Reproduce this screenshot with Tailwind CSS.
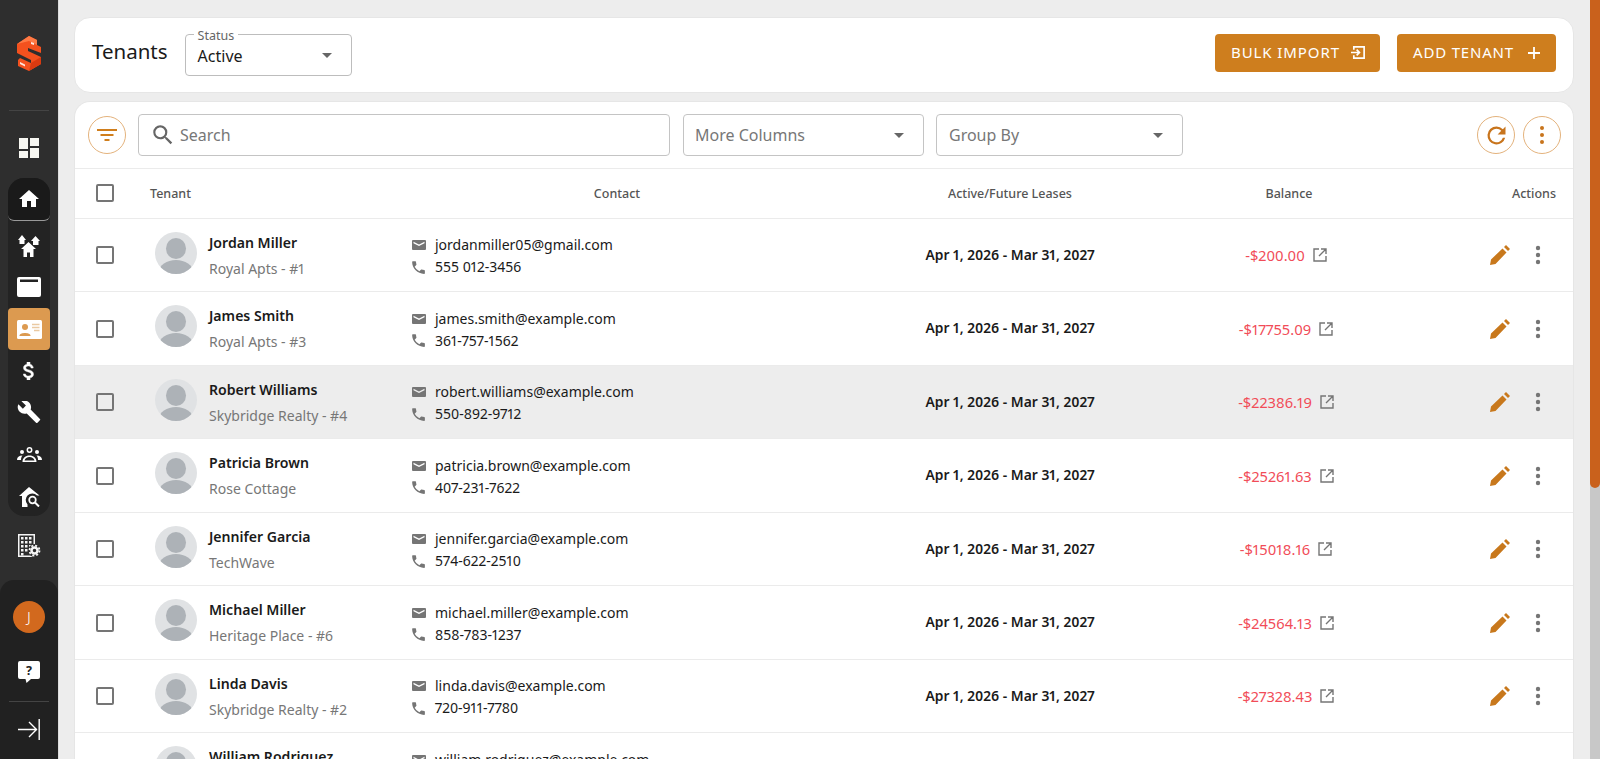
<!DOCTYPE html>
<html lang="en">

<head>
    <meta charset="UTF-8" />
    <title>Tenants</title>
    <script src="https://cdn.jsdelivr.net/npm/@tailwindcss/browser@4"></script>
</head>

<body class="bg-[#ededed] font-['Noto_Sans',sans-serif] proportional-nums text-[#1a1a1a] h-[759px] overflow-hidden">
    <div class="flex h-[759px]">

        <!-- sidebar -->
        <aside class="w-[59px] shrink-0 h-full bg-[#2e2e2e] border-r border-[#dcdcdc] flex flex-col items-center relative">
            <div class="h-[111px] w-[40px] border-b border-[#444] flex justify-center shrink-0 pt-[36px]">
                <svg width="24" height="35" viewBox="0 0 24 35"><path fill="#f4511e" d="M12 0 20 4V9L24 11V17L11 12V15L24 21V28L12 35 1 30V24L3 22 14 27V24L0 17V8Z"/><path fill="#ff7a45" d="M12 0 20 4V9L12 5 0 8Z"/><path fill="#d93a10" d="M14 27 24 21V28L12 35Z"/><path fill="#fff" opacity=".85" d="M3 26l5 2.500v2L3 28zM14 6l3 1v2l-3-1z"/></svg>
            </div>
            <svg class="mt-[27px] mb-[20px] shrink-0" width="20" height="20" viewBox="0 0 20 20" fill="#f7f7f2"><path d="M0 0h9v11H0zM11 0h9v8h-9zM0 13h9v7H0zM11 10h9v10h-9z"/></svg>

            <div class="w-[42px] h-[338px] bg-[#232323] rounded-[16px] flex flex-col items-center shrink-0">
                <div class="w-[42px] h-[43px] shrink-0 bg-[#1a1a1a] rounded-t-[16px] rounded-b-[6px] border-b border-[#999] flex items-center justify-center">
                    <svg width="24" height="24" viewBox="0 0 24 24" fill="#fff"><path d="M10 20v-6h4v6h5v-8h3L12 3 2 12h3v8z"/></svg>
                </div>
                <svg class="mt-[14px] shrink-0" width="22" height="22" viewBox="0 0 22 22" fill="#fff"><path d="M4 0 8 5H6.500V9H1.500V5H0zM17.500 1 22 6H20.500V10H15V6H13zM10.500 7 18 14H15.500V22H12V17.500H9V22H5.500V14H3z"/></svg>
                <svg class="mt-[20px] shrink-0" width="24" height="20" viewBox="0 0 24 20"><path fill="#fff" fill-rule="evenodd" d="M2 0h20a2 2 0 0 1 2 2v16a2 2 0 0 1-2 2H2a2 2 0 0 1-2-2V2a2 2 0 0 1 2-2zM3 2.500V5h18V2.500z"/></svg>
                <div class="mt-[11px] w-[42px] h-[42px] shrink-0 bg-[#dc9a50] rounded-[4px] flex items-center justify-center">
                    <svg width="25" height="19" viewBox="0 0 25 19"><rect width="25" height="19" rx="1.500" fill="#fff"/><circle cx="8" cy="7" r="3" fill="#dc9a50"/><path d="M2.500 15.500c0-3.500 11-3.500 11 0V16h-11z" fill="#dc9a50"/><path d="M15 4.500h7.500M15 7.500h7.500M17 10.500h5.500" stroke="#eac9a2" stroke-width="1.300"/></svg>
                </div>
                <svg class="mt-[12px] shrink-0" width="12" height="18" viewBox="6.500 3 11 18" fill="#fff"><path d="M11.800 10.900c-2.270-.59-3-1.200-3-2.150 0-1.090 1.010-1.850 2.700-1.850 1.780 0 2.440.85 2.500 2.100h2.210c-.07-1.720-1.120-3.300-3.210-3.810V3h-3v2.160c-1.940.42-3.500 1.680-3.500 3.610 0 2.310 1.910 3.460 4.700 4.130 2.500.6 3 1.480 3 2.410 0 .69-.49 1.790-2.700 1.790-2.060 0-2.870-.92-2.980-2.100h-2.200c.12 2.190 1.760 3.420 3.680 3.830V21h3v-2.150c1.950-.37 3.500-1.500 3.500-3.550 0-2.840-2.430-3.810-4.700-4.400z" stroke="#fff" stroke-width=".5"/></svg>
                <svg class="mt-[21px] shrink-0" width="24" height="22" viewBox="1 1.500 22 21.500" fill="#fff"><path d="M22.700 19l-9.100-9.100c.9-2.300.4-5-1.500-6.900-2-2-5-2.400-7.400-1.300L9 6 6 9 1.600 4.700C.4 7.100.9 10.100 2.900 12.100c1.900 1.900 4.600 2.400 6.900 1.500l9.100 9.100c.4.400 1 .4 1.400 0l2.300-2.300c.5-.4.5-1.100.1-1.400z"/></svg>
                <svg class="mt-[24px] shrink-0" width="25" height="15" viewBox="0 0 25 15" fill="#fff"><circle cx="12.500" cy="3" r="2.200" fill="none" stroke="#fff" stroke-width="1.500"/><circle cx="5" cy="5" r="2"/><circle cx="20" cy="5" r="2"/><path d="M0 13c0-3 2-4.500 5.500-4.500-1 1-1.500 2.500-1.500 4.500zM25 13c0-3-2-4.500-5.500-4.500 1 1 1.500 2.500 1.500 4.500zM5.500 15c0-4 3-6.500 7-6.500s7 2.500 7 6.500zM7.500 13.500h10c-.5-2-2.500-3.500-5-3.500s-4.500 1.500-5 3.500z" fill-rule="evenodd"/></svg>
                <svg class="mt-[25px] shrink-0" width="21" height="20" viewBox="0 0 21 20" fill="#fff"><path d="M10 0 20.500 8.500H18A6.500 6.500 0 0 0 8.500 17.500V20H3V9H0z"/><circle cx="13.500" cy="13" r="3.300" fill="none" stroke="#fff" stroke-width="1.700"/><path d="m16 15.500 4 4" stroke="#fff" stroke-width="2"/></svg>
            </div>

            <svg class="mt-[18px] shrink-0" width="23" height="23" viewBox="0 0 23 23" fill="#f5f5f5"><path fill-rule="evenodd" d="M0 0h17v23H0zM1.500 1.500v20h14v-20z"/><path d="M3 3h2.500v2.500H3zM7 3h2.500v2.500H7zM11 3h2.500v2.500H11zM3 7h2.500v2.500H3zM7 7h2.500v2.500H7zM11 7h2.500v2.500H11zM3 11h2.500v2.500H3zM7 11h2.500v2.500H7zM11 11h2.500v2.500H11zM3 15h2.500v2.500H3zM7 15h2.500v2.500H7zM3 19h2.500v2.500H3z"/><circle cx="16.500" cy="16.500" r="6.500" fill="#2e2e2e"/><circle cx="16.500" cy="16.500" r="3" fill="none" stroke="#f5f5f5" stroke-width="2.500"/><circle cx="16.500" cy="16.500" r="5" fill="none" stroke="#f5f5f5" stroke-width="1.800" stroke-dasharray="2 1.930"/></svg>

            <div class="absolute bottom-0 left-0 w-[58px] h-[179px] bg-[#212121] rounded-t-[14px] flex flex-col items-center">
                <div class="mt-[21px] w-[32px] h-[32px] shrink-0 rounded-full bg-[#d2691e] text-white text-[15px] font-light flex items-center justify-center">J</div>
                <svg class="mt-[28px] shrink-0" width="22" height="22" viewBox="0 0 22 22"><path fill="#fff" d="M2 0h18a2 2 0 0 1 2 2v14a2 2 0 0 1-2 2h-7l-4.500 4-1-4H2a2 2 0 0 1-2-2V2a2 2 0 0 1 2-2z"/><text x="11" y="13.500" text-anchor="middle" font-size="12.500" font-weight="700" fill="#222" font-family="Noto Sans">?</text></svg>
                <div class="w-[40px] border-t border-[#444] mt-[18px]"></div>
                <svg class="mt-[17px] shrink-0" width="22" height="21" viewBox="0 0 22 21" fill="none" stroke="#fff" stroke-width="1.400"><path d="M0 10.500h19M11 3l7.500 7.500L11 18M21.200 0v21"/></svg>
            </div>
        </aside>

        <!-- main -->
        <main class="flex-1 min-w-0 flex flex-col pl-[15px] pr-[16px] pt-[17px]">
            <div class="h-[76px] shrink-0 bg-white rounded-[16px] border border-[#e6e6e6] flex items-center pl-[17px] pr-[17px]">
                <h1 class="text-[20.500px] leading-none text-[#1a1a1a] mb-[8px]">Tenants</h1>
                <div class="relative ml-[17px] w-[167px] h-[42px] border border-[#bdbdbd] rounded-[4px] pl-3 pr-[19px] flex items-center justify-between">
                    <span class="absolute -top-[6px] left-[8px] bg-white px-[4px] text-[12.500px] leading-[14px] text-[#666]">Status</span>
                    <span class="text-[16px] mt-[2px]">Active</span>
                    <span class="w-0 h-0 border-x-[5px] border-x-transparent border-t-[5px] border-t-[#666]"></span>
                </div>
                <div class="ml-auto flex gap-[17px] -mt-[5px]">
                    <button class="w-[165px] h-[38px] bg-[#ce7e1e] rounded-[4px] text-white text-[15px] tracking-[0.9px] flex items-center justify-center gap-[11px] pl-[2px]">
                        BULK IMPORT
                        <svg width="15" height="15" viewBox="0 0 16 16" fill="none" stroke="#fff" stroke-width="1.800"><path d="M3 5V2h11v12H3v-3M0 8h9M6 5l3 3-3 3"/></svg>
                    </button>
                    <button class="w-[159px] h-[38px] bg-[#ce7e1e] rounded-[4px] text-white text-[15px] tracking-[0.8px] flex items-center justify-center gap-[14px]">
                        ADD TENANT
                        <svg width="12" height="12" viewBox="0 0 12 12" stroke="#fff" stroke-width="1.800"><path d="M6 0v12M0 6h12"/></svg>
                    </button>
                </div>
            </div>

            <div class="mt-[8px] flex-1 min-h-0 overflow-hidden bg-white rounded-t-[16px] border-x border-t border-[#e6e6e6]">
                <!-- toolbar -->
                <div class="h-[67px] flex items-center pl-[13px] pr-[12px] border-b border-[#ebebeb]">
                    <button class="w-[38px] h-[38px] rounded-full border border-[#e3b27c] flex items-center justify-center">
                        <svg width="20" height="13" viewBox="0 0 20 13" fill="#d07e1c"><path d="M0 0h20v2H0zM3.500 5h13v2h-13zM7.500 10h5v2h-5z"/></svg>
                    </button>
                    <div class="ml-[12px] w-[532px] h-[42px] border border-[#c4c4c4] rounded-[4px] flex items-center pl-[11px] gap-[4px] text-[16px] text-[#777]">
                        <svg width="26" height="26" viewBox="0 0 24 24" fill="#666"><path d="M15.500 14h-.79l-.28-.27A6.470 6.470 0 0 0 16 9.500 6.500 6.500 0 1 0 9.500 16c1.610 0 3.090-.59 4.230-1.570l.27.28v.79l5 4.990L20.490 19l-4.990-5zm-6 0C7.010 14 5 11.990 5 9.500S7.010 5 9.500 5 14 7.010 14 9.500 11.990 14 9.500 14z"/></svg>
                        Search
                    </div>
                    <div class="ml-[13px] w-[241px] h-[42px] border border-[#c4c4c4] rounded-[4px] flex items-center justify-between pl-[11px] pr-[19px] text-[16px] text-[#777]">
                        More Columns
                        <span class="w-0 h-0 border-x-[5px] border-x-transparent border-t-[5px] border-t-[#666]"></span>
                    </div>
                    <div class="ml-[12px] w-[247px] h-[42px] border border-[#c4c4c4] rounded-[4px] flex items-center justify-between pl-3 pr-[19px] text-[16px] text-[#777]">
                        Group By
                        <span class="w-0 h-0 border-x-[5px] border-x-transparent border-t-[5px] border-t-[#666]"></span>
                    </div>
                    <button class="ml-auto w-[38px] h-[38px] rounded-full border border-[#e3b27c] flex items-center justify-center">
                        <svg width="27" height="27" viewBox="0 0 24 24" fill="#c8741c"><path d="M17.650 6.350A7.960 7.960 0 0 0 12 4a8 8 0 1 0 7.730 10h-2.080A6 6 0 1 1 12 6c1.660 0 3.140.69 4.220 1.780L13 11h7V4l-2.350 2.350z"/></svg>
                    </button>
                    <button class="ml-[8px] w-[38px] h-[38px] rounded-full border border-[#e3b27c] flex items-center justify-center">
                        <svg width="24" height="24" viewBox="0 0 24 24" fill="#c8741c"><circle cx="12" cy="5" r="2"/><circle cx="12" cy="12" r="2"/><circle cx="12" cy="19" r="2"/></svg>
                    </button>
                </div>

                <!-- head row -->
                <div class="h-[50px] flex items-center border-b border-[#ebebeb] text-[12.500px] font-medium text-[#555]">
                    <div class="w-[58px] flex justify-center pl-[2px] -mt-[1px]">
                        <span class="w-[18px] h-[18px] border-2 border-[#757575] rounded-[2px]"></span>
                    </div>
                    <div class="w-[279px] pl-[17px] pt-[2px]">Tenant</div>
                    <div class="w-[410px] text-center pt-[2px]">Contact</div>
                    <div class="w-[376px] text-center pt-[2px]">Active/Future Leases</div>
                    <div class="w-[180px] text-center pl-[2px] pt-[2px]">Balance</div>
                    <div class="flex-1 text-right pr-[17px] pt-[2px]">Actions</div>
                </div>

                <div id="rows"></div>
            </div>
        </main>

        <!-- scrollbar -->
        <div class="w-[10px] shrink-0 h-full bg-[#c8c8c8]">
            <div class="h-[488px] bg-[#c9611c] rounded-b-[5px]"></div>
        </div>
    </div>

    <script>
        const tenants = [
            ["Jordan Miller", "Royal Apts - #1", "jordanmiller05@gmail.com", "555 012-3456", "-$200.00"],
            ["James Smith", "Royal Apts - #3", "james.smith@example.com", "361-757-1562", "-$17755.09"],
            ["Robert Williams", "Skybridge Realty - #4", "robert.williams@example.com", "550-892-9712", "-$22386.19"],
            ["Patricia Brown", "Rose Cottage", "patricia.brown@example.com", "407-231-7622", "-$25261.63"],
            ["Jennifer Garcia", "TechWave", "jennifer.garcia@example.com", "574-622-2510", "-$15018.16"],
            ["Michael Miller", "Heritage Place - #6", "michael.miller@example.com", "858-783-1237", "-$24564.13"],
            ["Linda Davis", "Skybridge Realty - #2", "linda.davis@example.com", "720-911-7780", "-$27328.43"],
            ["William Rodriguez", "Rose Cottage", "william.rodriguez@example.com", "312-555-0142", "-$19402.50"],
        ];

        // row 3 is hovered in the screenshot
        document.getElementById("rows").innerHTML = tenants.map((t, i) => `
            <div class="h-[73.470px] flex items-center border-b border-[#ebebeb] ${i === 2 ? "bg-[#ededed]" : ""}">
                <div class="w-[58px] flex justify-center pl-[2px]"><span class="w-[18px] h-[18px] border-2 border-[#757575] rounded-[2px]"></span></div>
                <div class="w-[279px] pl-[22px] flex items-center gap-[12px]">
                    <svg class="mb-[5px] rounded-full shrink-0" width="42" height="42" viewBox="0 0 42 42"><rect width="42" height="42" fill="#e0e2e4"/><ellipse cx="21" cy="16.500" rx="10" ry="10.500" fill="#adb2b7"/><ellipse cx="21" cy="40" rx="17" ry="12" fill="#adb2b7"/></svg>
                    <div class="mt-[1px] whitespace-nowrap">
                        <div class="text-[14.100px] font-semibold leading-[20px]">${t[0]}</div>
                        <div class="text-[14px] text-[#777] leading-[20px] mt-[6px]">${t[1]}</div>
                    </div>
                </div>
                <div class="w-[410px] text-[14px] leading-[22px] mt-[2px]">
                    <div class="flex items-center"><svg class="mr-[9px]" width="14" height="10" viewBox="0 0 14 10" fill="#757575"><path fill-rule="evenodd" d="M1 0h12a1 1 0 0 1 1 1v8a1 1 0 0 1-1 1H1a1 1 0 0 1-1-1V1a1 1 0 0 1 1-1zm.5 1.800v1.400L7 6l5.500-2.800V1.800L7 4.600z"/></svg>${t[2]}</div>
                    <div class="flex items-center"><svg class="-ml-[2px] mr-[8px]" width="17" height="17" viewBox="0 0 24 24" fill="#757575"><path d="M6.620 10.790a15.150 15.150 0 0 0 6.590 6.590l2.200-2.200c.27-.27.67-.36 1.020-.24 1.120.37 2.330.57 3.570.57.550 0 1 .45 1 1V20c0 .550-.45 1-1 1C10.610 21 3 13.390 3 4c0-.550.45-1 1-1h3.500c.55 0 1 .45 1 1 0 1.250.2 2.450.57 3.570.11.35.03.74-.25 1.020l-2.200 2.200z"/></svg>${t[3]}</div>
                </div>
                <div class="w-[376px] text-center text-[13.850px] font-semibold">Apr 1, 2026 - Mar 31, 2027</div>
                <div class="w-[180px] flex items-center justify-center gap-[8px] text-[14.700px] text-[#f14c58] pr-[4px]">${t[4]}
                    <svg width="14" height="14" viewBox="0 0 14 14" fill="none" stroke="#757575" stroke-width="1.400"><path d="M6 1H1v12h12V8M8 1h5v5M13 1 6 8"/></svg>
                </div>
                <div class="flex-1 flex items-center justify-end pr-[23px] gap-[16px]">
                    <svg width="20" height="20" viewBox="0 0 20 20" fill="#c8781c"><path d="M1 14.500 12.500 3.500 16.500 7.500 5.500 19 0 20zM14 2 16 0 20 4 18 6z"/></svg>
                    <svg width="24" height="24" viewBox="0 0 24 24" fill="#757575"><circle cx="12" cy="5" r="2.200"/><circle cx="12" cy="12" r="2.200"/><circle cx="12" cy="19" r="2.200"/></svg>
                </div>
            </div>`).join("");
    </script>
</body>

</html>
